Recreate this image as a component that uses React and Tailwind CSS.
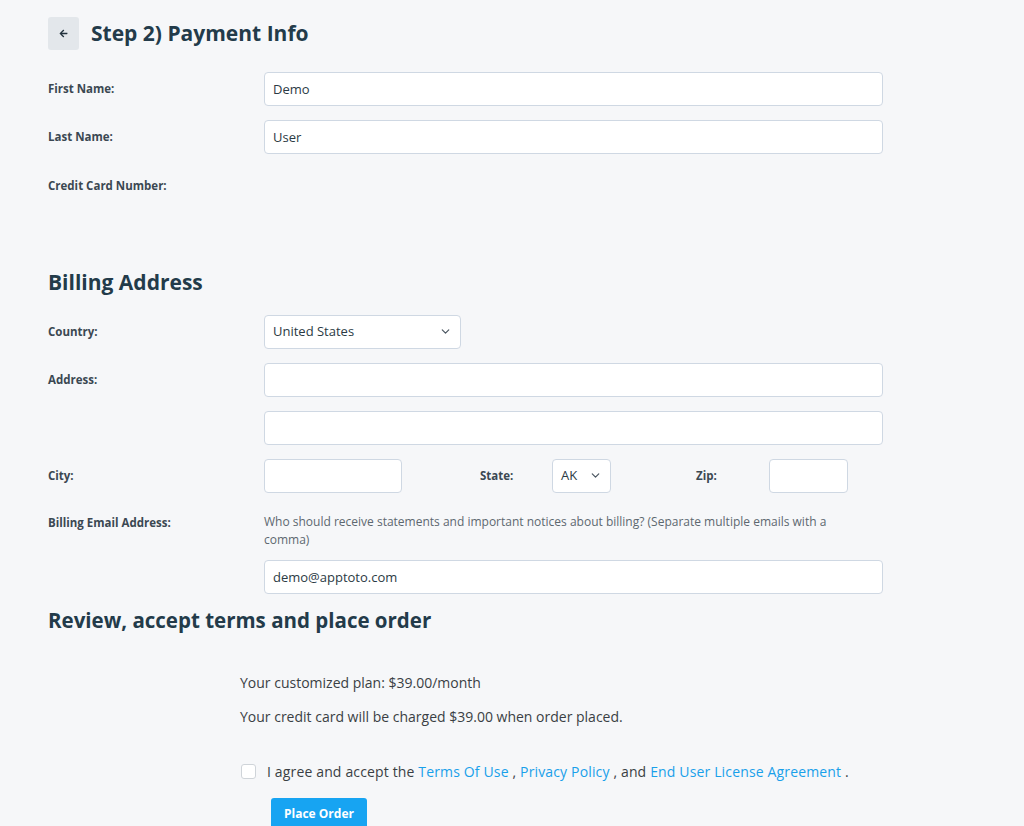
import React from 'react'
import {FaArrowLeft} from 'react-icons/fa'
import {ChevronDown} from 'lucide-react'

const inputCls = "h-[34px] rounded-[4px] border border-[#cfd8e3] bg-white px-[8px] text-[13px] text-[#2b3a44] outline-none"

function Label({children, className = ""}) {
    return <div className={`w-[216px] shrink-0 text-[11.5px] font-bold text-[#3b4852] ${className}`}>{children}</div>
}

function Select({value, className = ""}) {
    return (
        <div className={`${inputCls} flex items-center justify-between ${className}`}>
            <span>{value}</span>
            <ChevronDown size={13} strokeWidth={2.2} className="text-[#4a5560]" />
        </div>
    )
}

export default function App() {
    return (
        <div className="min-h-screen bg-[#f6f7f9] pl-[48px] pt-[17px] pb-10 text-[#243b4a]" style={{fontFamily: '"Open Sans", Lato, sans-serif'}}>
            {/* header */}
            <div className="flex items-center gap-[12px]">
                <button className="flex h-[33px] w-[31px] items-center justify-center rounded-[3px] bg-[#e3e7eb] text-[#22323d]">
                    <FaArrowLeft size={9} />
                </button>
                <h1 className="text-[21px] font-bold text-[#233b4a]">Step 2) Payment Info</h1>
            </div>

            <div className="mt-[22px] flex items-center">
                <Label>First Name:</Label>
                <input className={`${inputCls} w-[619px]`} defaultValue="Demo" />
            </div>
            <div className="mt-[14px] flex items-center">
                <Label>Last Name:</Label>
                <input className={`${inputCls} w-[619px]`} defaultValue="User" />
            </div>
            <div className="mt-[23px] h-[60px]">
                <Label>Credit Card Number:</Label>
            </div>

            <h2 className="mt-[30px] text-[21px] font-bold text-[#233b4a]">Billing Address</h2>

            <div className="mt-[16px] flex items-center">
                <Label>Country:</Label>
                <Select value="United States" className="w-[197px]" />
            </div>
            <div className="mt-[14px] flex items-start">
                <Label className="pt-[8px]">Address:</Label>
                <div className="flex flex-col gap-[14px]">
                    <input className={`${inputCls} w-[619px]`} />
                    <input className={`${inputCls} w-[619px]`} />
                </div>
            </div>
            <div className="mt-[14px] flex items-center">
                <Label>City:</Label>
                <input className={`${inputCls} w-[138px]`} />
                <div className="ml-[78px] w-[72px] text-[11.5px] font-bold text-[#3b4852]">State:</div>
                <Select value="AK" className="w-[59px]" />
                <div className="ml-[85px] w-[73px] text-[11.5px] font-bold text-[#3b4852]">Zip:</div>
                <input className={`${inputCls} w-[79px]`} />
            </div>
            <div className="mt-[20px] flex items-start">
                <Label className="pt-[1px]">Billing Email Address:</Label>
                <div className="w-[619px]">
                    <p className="pr-[22px] text-[12px] leading-[18px] text-[#5d6870]">
                        Who should receive statements and important notices about billing? (Separate multiple emails with a comma)
                    </p>
                    <input className={`${inputCls} mt-[11px] w-[619px]`} defaultValue="demo@apptoto.com" />
                </div>
            </div>

            <h2 className="mt-[11px] text-[20.5px] font-bold text-[#233b4a]">Review, accept terms and place order</h2>

            <div className="ml-[192px] mt-[37px] text-[14px] text-[#3a3f44]">
                <p>Your customized plan: $39.00/month</p>
                <p className="mt-[13px]">Your credit card will be charged $39.00 when order placed.</p>
                <label className="mt-[34px] flex items-center">
                    <span className="ml-[1px] h-[15px] w-[15px] rounded-[3px] border border-[#cfd4d9] bg-white" />
                    <span className="ml-[11px] tracking-[0.15px]">
                        I agree and accept the <a className="text-[#19a0ea]">Terms Of Use</a> , <a className="text-[#19a0ea]">Privacy Policy</a> , and <a className="text-[#19a0ea]">End User License Agreement</a> .
                    </span>
                </label>
                <button className="ml-[31px] mt-[16px] h-[32px] rounded-[3px] bg-[#17a4f2] px-[13px] text-[12px] font-bold text-white">
                    Place Order
                </button>
            </div>
        </div>
    )
}
